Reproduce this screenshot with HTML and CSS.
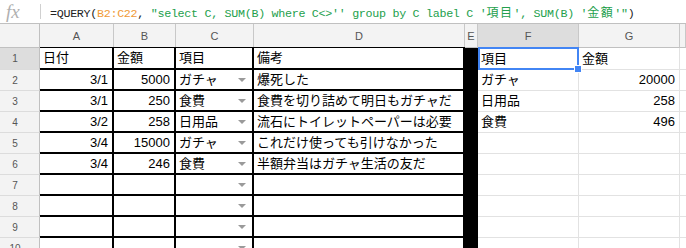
FILE: index.html
```html
<!DOCTYPE html>
<html lang="ja">
<head>
  <meta charset="UTF-8" />
  <title>家計簿 QUERY</title>
  <link rel="stylesheet" href="styles.css">
</head>
<body>
  <!-- Formula bar -->
  <div class="formula-bar">
    <span class="fx">fx</span>
    <span class="sep"></span>
    <span class="formula">=QUERY(<span class="ref">B2:C22</span>, <span class="str">"select C, SUM(B) where C&lt;&gt;'' group by C label C '<span class="cjk">項目</span>', SUM(B) '<span class="cjk">金額</span>'"</span>)</span>
  </div>

  <!-- Grid -->
  <div class="sheet">
    <div class="row heads">
      <div class="corner"></div>
      <div class="ch col-a">A</div>
      <div class="ch col-b">B</div>
      <div class="ch col-c">C</div>
      <div class="ch col-d">D</div>
      <div class="ch col-e">E</div>
      <div class="ch col-f active">F</div>
      <div class="ch col-g">G</div>
      <div class="ch col-h"></div>
    </div>

    <div class="row first">
      <div class="rh active">1</div>
      <div class="cell col-a blk top">日付</div>
      <div class="cell col-b blk top">金額</div>
      <div class="cell col-c blk top">項目</div>
      <div class="cell col-d blk top">備考</div>
      <div class="cell col-e fill"></div>
      <div class="cell col-f selected">項目<span class="sel"></span></div>
      <div class="cell col-g">金額</div>
      <div class="cell col-h"></div>
    </div>

    <div class="row">
      <div class="rh">2</div>
      <div class="cell col-a blk num">3/1</div>
      <div class="cell col-b blk num">5000</div>
      <div class="cell col-c blk">ガチャ<span class="drop"></span></div>
      <div class="cell col-d blk">爆死した</div>
      <div class="cell col-e fill"></div>
      <div class="cell col-f">ガチャ</div>
      <div class="cell col-g num">20000</div>
      <div class="cell col-h"></div>
    </div>

    <div class="row">
      <div class="rh">3</div>
      <div class="cell col-a blk num">3/1</div>
      <div class="cell col-b blk num">250</div>
      <div class="cell col-c blk">食費<span class="drop"></span></div>
      <div class="cell col-d blk">食費を切り詰めて明日もガチャだ</div>
      <div class="cell col-e fill"></div>
      <div class="cell col-f">日用品</div>
      <div class="cell col-g num">258</div>
      <div class="cell col-h"></div>
    </div>

    <div class="row">
      <div class="rh">4</div>
      <div class="cell col-a blk num">3/2</div>
      <div class="cell col-b blk num">258</div>
      <div class="cell col-c blk">日用品<span class="drop"></span></div>
      <div class="cell col-d blk">流石にトイレットペーパーは必要</div>
      <div class="cell col-e fill"></div>
      <div class="cell col-f">食費</div>
      <div class="cell col-g num">496</div>
      <div class="cell col-h"></div>
    </div>

    <div class="row">
      <div class="rh">5</div>
      <div class="cell col-a blk num">3/4</div>
      <div class="cell col-b blk num">15000</div>
      <div class="cell col-c blk">ガチャ<span class="drop"></span></div>
      <div class="cell col-d blk">これだけ使っても引けなかった</div>
      <div class="cell col-e fill"></div>
      <div class="cell col-f"></div>
      <div class="cell col-g"></div>
      <div class="cell col-h"></div>
    </div>

    <div class="row">
      <div class="rh">6</div>
      <div class="cell col-a blk num">3/4</div>
      <div class="cell col-b blk num">246</div>
      <div class="cell col-c blk">食費<span class="drop"></span></div>
      <div class="cell col-d blk">半額弁当はガチャ生活の友だ</div>
      <div class="cell col-e fill"></div>
      <div class="cell col-f"></div>
      <div class="cell col-g"></div>
      <div class="cell col-h"></div>
    </div>

    <div class="row">
      <div class="rh">7</div>
      <div class="cell col-a blk"></div>
      <div class="cell col-b blk"></div>
      <div class="cell col-c blk"><span class="drop"></span></div>
      <div class="cell col-d blk"></div>
      <div class="cell col-e fill"></div>
      <div class="cell col-f"></div>
      <div class="cell col-g"></div>
      <div class="cell col-h"></div>
    </div>

    <div class="row">
      <div class="rh">8</div>
      <div class="cell col-a blk"></div>
      <div class="cell col-b blk"></div>
      <div class="cell col-c blk"><span class="drop"></span></div>
      <div class="cell col-d blk"></div>
      <div class="cell col-e fill"></div>
      <div class="cell col-f"></div>
      <div class="cell col-g"></div>
      <div class="cell col-h"></div>
    </div>

    <div class="row">
      <div class="rh">9</div>
      <div class="cell col-a blk"></div>
      <div class="cell col-b blk"></div>
      <div class="cell col-c blk"><span class="drop"></span></div>
      <div class="cell col-d blk"></div>
      <div class="cell col-e fill"></div>
      <div class="cell col-f"></div>
      <div class="cell col-g"></div>
      <div class="cell col-h"></div>
    </div>

    <div class="row">
      <div class="rh">10</div>
      <div class="cell col-a blk"></div>
      <div class="cell col-b blk"></div>
      <div class="cell col-c blk"><span class="drop"></span></div>
      <div class="cell col-d blk"></div>
      <div class="cell col-e fill"></div>
      <div class="cell col-f"></div>
      <div class="cell col-g"></div>
      <div class="cell col-h"></div>
    </div>
  </div>
</body>
</html>
```

FILE: styles.css
```css
/* General */
body {
  margin: 0;
  width: 686px;
  height: 248px;
  overflow: hidden;
  background-color: #ffffff;
  font-family: "Liberation Sans", Arial, "Noto Sans CJK JP", sans-serif;
  color: #000000;
}

/* Formula bar */
.formula-bar {
  display: flex;
  align-items: center;
  height: 24px;
  box-sizing: border-box;
  border-bottom: 1px solid #c0c0c0;
  white-space: nowrap;
}

.fx {
  width: 32px;
  padding-left: 6px;
  font-family: "Liberation Serif", serif;
  font-style: italic;
  font-size: 19px;
  color: #b0b0b0;
  line-height: 24px;
}

.sep {
  width: 1px;
  height: 15px;
  margin-left: 2px;
  background-color: #d0d0d0;
}

.formula {
  padding-left: 9px;
  font-family: "Liberation Mono", "Noto Sans CJK JP", monospace;
  font-size: 11.7px;
  letter-spacing: -0.3px;
  color: #222222;
}

.ref {
  color: #f09a36;
}

.str {
  color: #23a04c;
}

.cjk {
  font-family: "Noto Sans CJK JP", sans-serif;
  font-size: 12px;
  letter-spacing: 1.5px;
}

/* Grid */
.row {
  display: flex;
  height: 21px;
}

.row.heads {
  height: 24px;
}

.row.first {
  height: 22px;
}

.corner,
.ch,
.rh,
.cell {
  flex: none;
  box-sizing: border-box;
  display: flex;
  align-items: center;
  white-space: nowrap;
  overflow: hidden;
}

.corner {
  width: 40px;
  background-color: #f3f3f3;
  border-right: 1px solid #c0c0c0;
  border-bottom: 1px solid #c0c0c0;
}

.ch {
  justify-content: center;
  background-color: #f3f3f3;
  border-right: 1px solid #c8c8c8;
  border-bottom: 1px solid #c0c0c0;
  font-size: 11px;
  color: #555555;
}

.ch.active,
.rh.active {
  background-color: #dddddd;
}

.rh {
  width: 40px;
  justify-content: center;
  padding-right: 9px;
  background-color: #f3f3f3;
  border-right: 1px solid #c0c0c0;
  border-bottom: 1px solid #dcdcdc;
  font-size: 10px;
  color: #555555;
}

.cell {
  padding: 0 4px 0 3px;
  font-size: 13px;
  line-height: 16px;
  border-right: 1px solid #e2e2e2;
  border-bottom: 1px solid #e2e2e2;
}

.cell.num {
  justify-content: flex-end;
}

/* Column widths */
.col-a { width: 74px; }
.col-b { width: 62px; }
.col-c { width: 78px; }
.col-d { width: 211px; }
.col-e { width: 13px; }
.col-f { width: 101px; }
.col-g { width: 101px; }
.col-h { flex: 1; }

/* Black bordered block A:D */
.cell.blk {
  border-right: 2px solid #000000;
  border-bottom: 2px solid #000000;
}

.cell.blk.top {
  box-shadow: 0 -1px 0 #000000;
}

.cell.fill {
  background-color: #000000;
  border-color: #000000;
}

/* Dropdown arrow in column C */
.drop {
  margin-left: auto;
  margin-right: 2px;
  width: 0;
  height: 0;
  border-left: 4px solid transparent;
  border-right: 4px solid transparent;
  border-top: 4px solid #9a9a9a;
}

/* Active cell F1 */
.cell.selected {
  position: relative;
  overflow: visible;
}

.sel {
  position: absolute;
  top: -1px;
  left: 0;
  right: -1px;
  bottom: -1px;
  border: 2px solid #4285f4;
}

.sel::after {
  content: "";
  position: absolute;
  right: -5px;
  bottom: -5px;
  width: 6px;
  height: 6px;
  background-color: #4285f4;
  border: 1px solid #ffffff;
}
```
